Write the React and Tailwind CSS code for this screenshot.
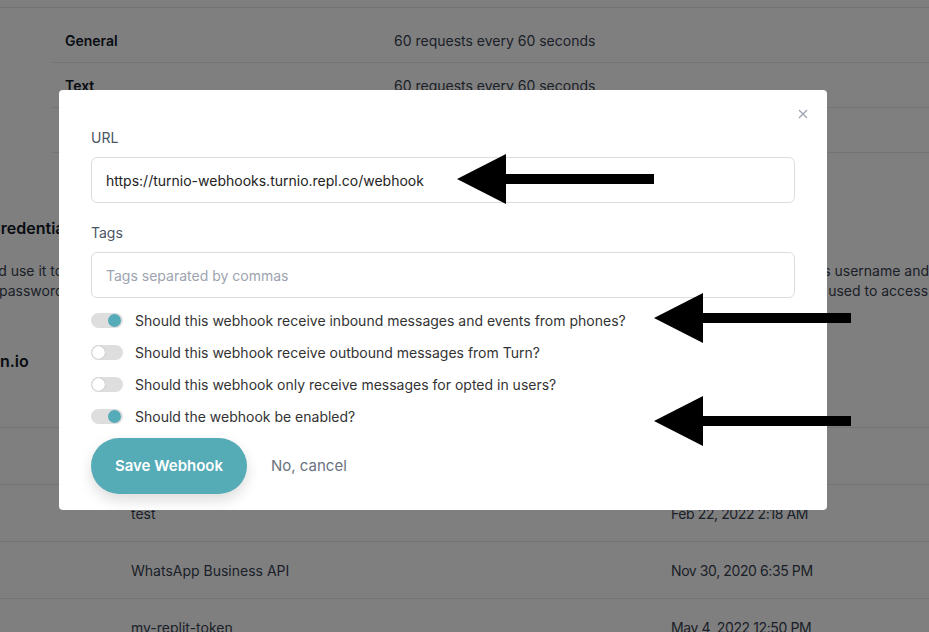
import React from 'react';

const limits = [
  { name: 'General', value: '60 requests every 60 seconds', first: true },
  { name: 'Text', value: '60 requests every 60 seconds' },
  { name: 'Media', value: '60 requests every 60 seconds' },
];

const tokens = [
  { name: 'test', date: 'Feb 22, 2022 2:18 AM' },
  { name: 'WhatsApp Business API', date: 'Nov 30, 2020 6:35 PM' },
  { name: 'my-replit-token', date: 'May 4, 2022 12:50 PM' },
];

const options = [
  { label: 'Should this webhook receive inbound messages and events from phones?', on: true },
  { label: 'Should this webhook receive outbound messages from Turn?', on: false },
  { label: 'Should this webhook only receive messages for opted in users?', on: false },
  { label: 'Should the webhook be enabled?', on: true },
];

const Toggle = ({ on }) => (
  <span
    className={`flex h-[15px] w-[32px] shrink-0 items-center rounded-full bg-[#dedede] px-[1px] ${
      on ? 'justify-end' : 'justify-start'
    }`}
  >
    <span
      className={`h-[13px] w-[13px] rounded-full ${
        on ? 'mr-[1px] bg-[#55abb7]' : 'bg-white shadow-[0_0_1px_rgba(0,0,0,0.35)]'
      }`}
    />
  </span>
);

const BackgroundPage = () => (
  <div className="text-[14px] text-[#374151]">
    <div className="h-[8px] border-b border-[#e5e7eb]" />
    <div className="ml-[53px]">
      {limits.map((row) => (
        <div
          key={row.name}
          className={`flex items-center border-b border-[#e5e7eb] pl-[12px] ${
            row.first ? 'h-[55px] pt-[10px]' : 'h-[45px]'
          }`}
        >
          <span className="w-[329px] font-semibold text-[#111827]">{row.name}</span>
          <span>{row.value}</span>
        </div>
      ))}
    </div>

    <div className="flex h-[274px] whitespace-nowrap">
      <div className="w-[828px] pt-[63px]">
        <h2 className="-ml-[11px] text-[16px] font-semibold leading-[24px] text-[#111827]">Credentials</h2>
        <p className="mt-[21px] -ml-[18px] leading-[20px]">and use it to</p>
        <p className="-ml-[1px] leading-[20px]">password</p>
        <h2 className="mt-[48px] -ml-[22px] text-[16px] font-semibold leading-[24px] text-[#111827]">turn.io</h2>
      </div>
      <div className="pt-[108px] leading-[20px]">
        <p>s username and</p>
        <p className="ml-[5px]">used to access</p>
      </div>
    </div>

    <div className="border-t border-[#e5e7eb]">
      <div className="h-[57px] border-b border-[#e5e7eb]" />
      {tokens.map((row) => (
        <div key={row.name} className="flex h-[57px] items-center border-b border-[#e5e7eb] pl-[131px]">
          <span className="w-[540px]">{row.name}</span>
          <span className="tracking-[-0.4px]">{row.date}</span>
        </div>
      ))}
    </div>
  </div>
);

const Arrows = () => (
  <svg className="pointer-events-none absolute inset-0" width="929" height="632" viewBox="0 0 929 632">
    <g fill="#000">
      <polygon points="457,179 506,154 506,174 654,174 654,184 506,184 506,204" />
      <polygon points="654,318 703,293 703,313 851,313 851,323 703,323 703,343" />
      <polygon points="654,421 703,396 703,416 851,416 851,426 703,426 703,446" />
    </g>
  </svg>
);

export default function App() {
  return (
    <div
      className="relative h-[632px] w-full overflow-hidden bg-white"
      style={{ fontFamily: 'Inter, "Noto Sans", sans-serif' }}
    >
      <BackgroundPage />
      <div className="absolute inset-0 bg-black/50" />

      <div className="absolute left-[59px] top-[90px] w-[768px] rounded-[4px] bg-white px-[32px] pb-[16px] pt-[38px]">
        <button className="absolute right-[18px] top-[18px] flex h-[12px] w-[12px] items-center justify-center text-[#9ca3af]">
          <svg width="10" height="10" viewBox="0 0 10 10" fill="none" stroke="currentColor" strokeWidth="1.3">
            <path d="M1 1l8 8M9 1l-8 8" />
          </svg>
        </button>

        <label className="block text-[14px] leading-[20px] text-[#4b5563]">URL</label>
        <div className="mt-[9px] flex h-[46px] items-center rounded-[6px] border border-[#dcdcdc] px-[14px] text-[14px] text-[#222]">
          https://turnio-webhooks.turnio.repl.co/webhook
        </div>

        <label className="mt-[20px] block text-[14px] leading-[20px] text-[#4b5563]">Tags</label>
        <div className="mt-[9px] flex h-[46px] items-center rounded-[6px] border border-[#dcdcdc] px-[14px] text-[14px] text-[#9ca3af]">
          Tags separated by commas
        </div>

        <div className="mt-[6px] flex flex-col">
          {options.map((opt) => (
            <div key={opt.label} className="flex h-[32px] items-center gap-[12px]">
              <Toggle on={opt.on} />
              <span className="text-[14px] text-[#333]">{opt.label}</span>
            </div>
          ))}
        </div>

        <div className="mt-[6px] flex items-center gap-[24px]">
          <button className="h-[56px] w-[156px] rounded-full bg-[#55abb6] text-[15px] font-semibold text-white shadow-[0_6px_14px_rgba(0,0,0,0.14)]">
            Save Webhook
          </button>
          <button className="text-[15px] text-[#6b7280]">No, cancel</button>
        </div>
      </div>

      <Arrows />
    </div>
  );
}
